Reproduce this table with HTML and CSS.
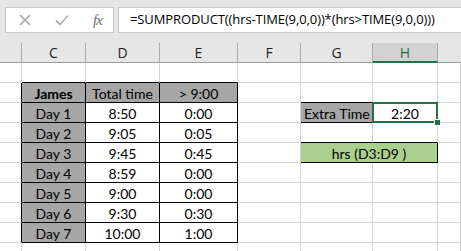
FILE: index.html
```html
<!DOCTYPE html>
<html>
<head>
<meta charset="utf-8">
<link rel="stylesheet" href="styles.css">
</head>
<body>
<div class="app">
  <div class="fbar">
    <div class="fbtns">
      <svg class="ico" width="12" height="12" viewBox="0 0 12 12"><path d="M1 1 L11 11 M11 1 L1 11" stroke="#a6a6a6" stroke-width="1.6" fill="none"/></svg>
      <svg class="ico" width="14" height="12" viewBox="0 0 14 12"><path d="M1 6.5 L5 10.5 L13 1.5" stroke="#b0b0b0" stroke-width="1.8" fill="none"/></svg>
      <span class="fx">fx</span>
    </div>
    <div class="fin">=SUMPRODUCT((hrs-TIME(9,0,0))*(hrs&gt;TIME(9,0,0)))</div>
  </div>
  <div class="grid">
    <div class="hd"></div><div class="hd">C</div><div class="hd">D</div><div class="hd">E</div><div class="hd">F</div><div class="hd">G</div><div class="hd sel">H</div><div class="hd last"></div>

    <div class="c"></div><div class="c bb"></div><div class="c bb"></div><div class="c bb"></div><div class="c"></div><div class="c"></div><div class="c"></div><div class="c"></div>

    <div class="c br"></div><div class="c t g b">James</div><div class="c t g">Total time</div><div class="c t g">&gt; 9:00</div><div class="c bl"></div><div class="c bb"></div><div class="c"></div><div class="c"></div>

    <div class="c br"></div><div class="c t g">Day 1</div><div class="c t">8:50</div><div class="c t">0:00</div><div class="c bl"></div><div class="c t g l">Extra Time</div><div class="c act">2:20<span class="handle"></span></div><div class="c"></div>

    <div class="c br"></div><div class="c t g">Day 2</div><div class="c t">9:05</div><div class="c t">0:05</div><div class="c bl"></div><div class="c bb"></div><div class="c bb"></div><div class="c"></div>

    <div class="c br"></div><div class="c t g">Day 3</div><div class="c t">9:45</div><div class="c t">0:45</div><div class="c bl"></div><div class="c t green span2">hrs (D3:D9 )</div><div class="c"></div>

    <div class="c br"></div><div class="c t g">Day 4</div><div class="c t">8:59</div><div class="c t">0:00</div><div class="c bl"></div><div class="c"></div><div class="c"></div><div class="c"></div>

    <div class="c br"></div><div class="c t g">Day 5</div><div class="c t">9:00</div><div class="c t">0:00</div><div class="c bl"></div><div class="c"></div><div class="c"></div><div class="c"></div>

    <div class="c br"></div><div class="c t g">Day 6</div><div class="c t">9:30</div><div class="c t">0:30</div><div class="c bl"></div><div class="c"></div><div class="c"></div><div class="c"></div>

    <div class="c br"></div><div class="c t g">Day 7</div><div class="c t">10:00</div><div class="c t">1:00</div><div class="c bl"></div><div class="c"></div><div class="c"></div><div class="c"></div>

    <div class="c"></div><div class="c"></div><div class="c"></div><div class="c"></div><div class="c"></div><div class="c"></div><div class="c"></div><div class="c"></div>
  </div>
</div>
</body>
</html>
```
FILE: styles.css
```css
* { box-sizing: border-box; }
html, body { margin: 0; padding: 0; }
body { width: 461px; height: 251px; overflow: hidden; background: #fff; }
.app { width: 461px; }

/* formula bar */
.fbar {
  height: 43px;
  background: #e6e6e6;
  display: flex;
  align-items: flex-start;
  padding: 7px 0 0 5px;
  gap: 4px;
}
.fbtns {
  width: 109px;
  height: 26px;
  background: #fff;
  border: 1px solid #c6c6c6;
  display: flex;
  align-items: center;
  padding-left: 13px;
  gap: 0;
}
.ico { display: block; }
.fbtns .ico:nth-child(1) { margin-right: 24px; }
.fbtns .ico:nth-child(2) { margin-right: 24px; }
.fx {
  font-family: "Liberation Serif", serif;
  font-style: italic;
  font-size: 15px;
  color: #6e6e6e;
  letter-spacing: -1px;
}
.fin {
  flex: 1;
  height: 26px;
  background: #fff;
  border: 1px solid #c6c6c6;
  border-right: none;
  font-family: "Open Sans", sans-serif;
  font-size: 13px;
  letter-spacing: -0.1px;
  color: #000;
  padding-left: 11px;
  line-height: 23px;
  white-space: nowrap;
  overflow: hidden;
}

/* sheet grid */
.grid {
  display: grid;
  grid-template-columns: 22px 64px 74px 78px 63px 72px 65px 1fr;
  grid-template-rows: 20px repeat(10, 20px);
  font-family: "Lato", sans-serif;
  font-size: 14px;
  color: #000;
}
.hd {
  background: #e6e6e6;
  border-right: 1px solid #ababab;
  border-bottom: 1px solid #9b9b9b;
  text-align: center;
  font-family: "Open Sans", sans-serif;
  font-size: 14px;
  line-height: 19px;
  color: #222;
}
.hd.last { border-right: none; }
.hd.sel {
  background: #d2d2d2;
  color: #217346;
  border-bottom: 2px solid #217346;
  border-right-color: #ababab;
}
.c {
  border-right: 1px solid #d4d4d4;
  border-bottom: 1px solid #d4d4d4;
  line-height: 22px;
  white-space: nowrap;
  position: relative;
}
.c.t { border-right-color: #000; border-bottom-color: #000; text-align: center; }
.c.l { text-align: left; padding-left: 3px; }
.c.g { background: #a6a6a6; }
.c.b { font-weight: bold; }
.c.br { border-right-color: #000; }
.c.bb { border-bottom-color: #000; }
.c.green { background: #a9d08e; }
.span2 { grid-column: span 2; }

/* active cell */
.c.act {
  text-align: center;
  border-bottom-color: #d4d4d4;
}
.c.act::before {
  content: "";
  position: absolute;
  left: -1px; top: -1px; right: -1px; bottom: -1px;
  border: 2px solid #217346;
}
.handle {
  position: absolute;
  right: -4px;
  bottom: -4px;
  width: 7px;
  height: 7px;
  background: #217346;
  border: 1px solid #fff;
  z-index: 1;
}
```
